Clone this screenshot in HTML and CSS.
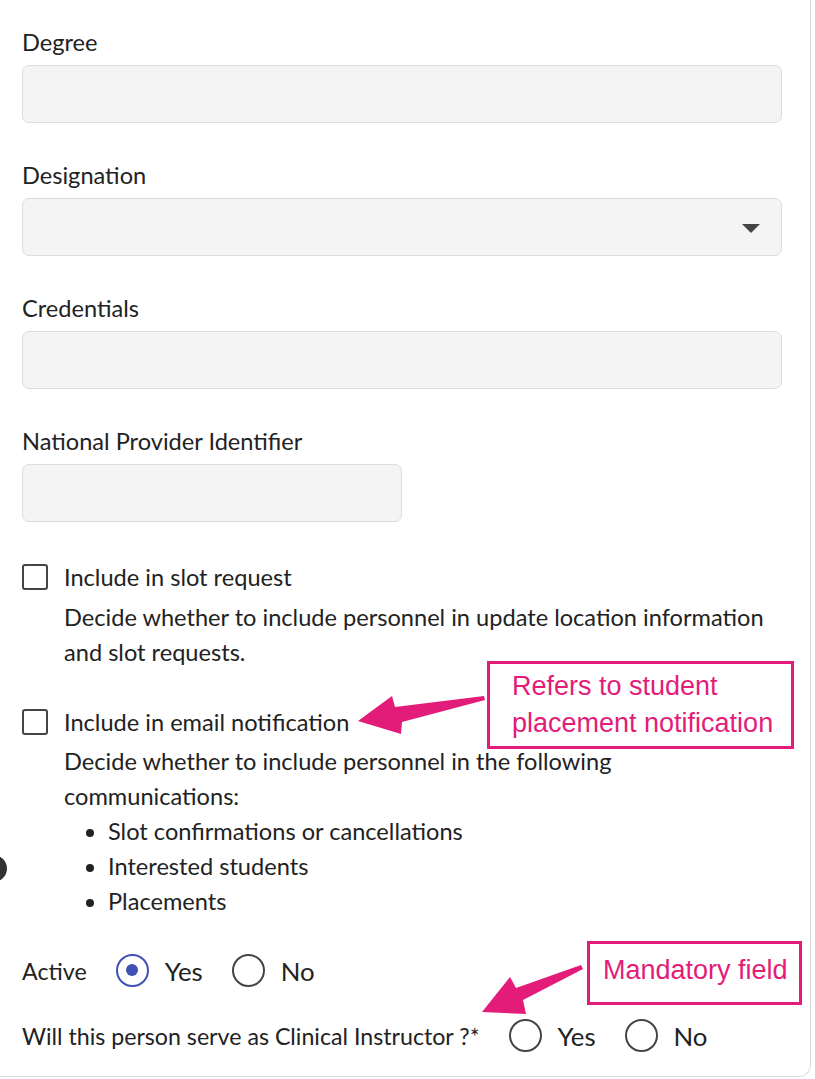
FILE: index.html
```html
<!DOCTYPE html>
<html>
<head>
    <title>Personnel Details</title>
    <link rel="stylesheet" href="styles.css">
</head>
<body>
    <div class="card">
        <div class="field">
            <label class="label">Degree</label>
            <div class="input"></div>
        </div>
        <div class="field">
            <label class="label">Designation</label>
            <div class="input select"><span class="caret"></span></div>
        </div>
        <div class="field">
            <label class="label">Credentials</label>
            <div class="input"></div>
        </div>
        <div class="field npi">
            <label class="label">National Provider Identifier</label>
            <div class="input short"></div>
        </div>

        <div class="check">
            <span class="box"></span>
            <div class="check-body">
                <div class="check-title">Include in slot request</div>
                <div class="desc">Decide whether to include personnel in update location information and slot requests.</div>
            </div>
        </div>

        <div class="check last">
            <span class="box"></span>
            <div class="check-body">
                <div class="check-title">Include in email notification</div>
                <div class="desc">Decide whether to include personnel in the following communications:</div>
                <ul class="list">
                    <li>Slot confirmations or cancellations</li>
                    <li>Interested students</li>
                    <li>Placements</li>
                </ul>
            </div>
        </div>

        <div class="radio-row">
            <span class="radio-label">Active</span>
            <span class="radio checked"></span><span class="opt">Yes</span>
            <span class="radio"></span><span class="opt">No</span>
        </div>
        <div class="radio-row">
            <span class="radio-label">Will this person serve as Clinical Instructor ?*</span>
            <span class="radio"></span><span class="opt">Yes</span>
            <span class="radio"></span><span class="opt">No</span>
        </div>
    </div>

    <span class="side-dot"></span>

    <!-- annotations -->
    <div class="note note-email">Refers to student<br>placement notification</div>
    <div class="note note-mandatory">Mandatory field</div>
    <svg class="arrows" width="815" height="1079" viewBox="0 0 815 1079">
        <polygon fill="#e31c79" points="358,721 392,696 395,707 484,696 485,700 402,722 401,734"/>
        <polygon fill="#e31c79" points="482,1012 510,977 516,988 581,965 583,969 523,1000 526,1014"/>
    </svg>
</body>
</html>
```

FILE: styles.css
```css
body {
    margin: 0;
    background-color: #fff;
    color: #222;
    font-family: "Lato", "Open Sans", sans-serif;
    font-size: 23.6px;
    position: relative;
    width: 815px;
    height: 1079px;
    overflow: hidden;
}

.card {
    width: 811px;
    height: 1077px;
    padding: 26px 28px 0 22px;
    box-sizing: border-box;
    border-right: 1px solid #ddd;
    border-bottom: 1px solid #ddd;
    border-bottom-right-radius: 12px;
}

.field {
    margin-bottom: 36px;
}

.field.npi {
    margin-bottom: 38px;
}

.label {
    display: block;
    line-height: 32px;
    margin-bottom: 7px;
}

.input {
    height: 58px;
    box-sizing: border-box;
    background-color: #f4f4f4;
    border: 1px solid #dcdcdc;
    border-radius: 7px;
    position: relative;
}

.input.short {
    width: 380px;
}

.select .caret {
    position: absolute;
    right: 21px;
    top: 25px;
    border-left: 9px solid transparent;
    border-right: 9px solid transparent;
    border-top: 9px solid #444;
}

.check {
    display: flex;
    gap: 16px;
    margin-bottom: 35px;
    line-height: 35px;
}

.check.last {
    margin-bottom: 19px;
}

.box {
    flex: none;
    width: 26px;
    height: 26px;
    box-sizing: border-box;
    border: 2px solid #444;
    border-radius: 3px;
    margin-top: 4px;
}

.check-title {
    margin-bottom: 4.5px;
}

.list {
    margin: 0;
    padding-left: 44px;
}

.radio-row {
    display: flex;
    align-items: center;
    height: 65px;
    font-size: 23.2px;
}

.radio-label {
    margin-right: 29px;
}

.radio {
    flex: none;
    width: 33px;
    height: 33px;
    box-sizing: border-box;
    border: 2.5px solid #444;
    border-radius: 50%;
    margin-right: 16px;
    position: relative;
}

.radio.checked {
    border-color: #3f51b5;
}

.radio.checked:after {
    content: "";
    position: absolute;
    left: 8px;
    top: 8px;
    width: 12px;
    height: 12px;
    border-radius: 50%;
    background-color: #3f51b5;
}

.opt {
    font-size: 25.8px;
    margin-right: 29px;
}

.side-dot {
    position: absolute;
    left: -20px;
    top: 855px;
    width: 27px;
    height: 27px;
    border-radius: 50%;
    background-color: #333;
}

.note {
    position: absolute;
    box-sizing: border-box;
    border: 3px solid #e31c79;
    color: #e31c79;
    font-family: "Liberation Sans", Arial, sans-serif;
    font-size: 27px;
    background-color: #fff;
}

.note-email {
    left: 487px;
    top: 661px;
    width: 307px;
    height: 88px;
    padding: 4px 0 0 22px;
    line-height: 37px;
}

.note-mandatory {
    left: 587px;
    top: 941px;
    width: 215px;
    height: 64px;
    padding: 9px 0 0 13px;
    line-height: 34px;
}

.arrows {
    position: absolute;
    left: 0;
    top: 0;
    pointer-events: none;
}
```
